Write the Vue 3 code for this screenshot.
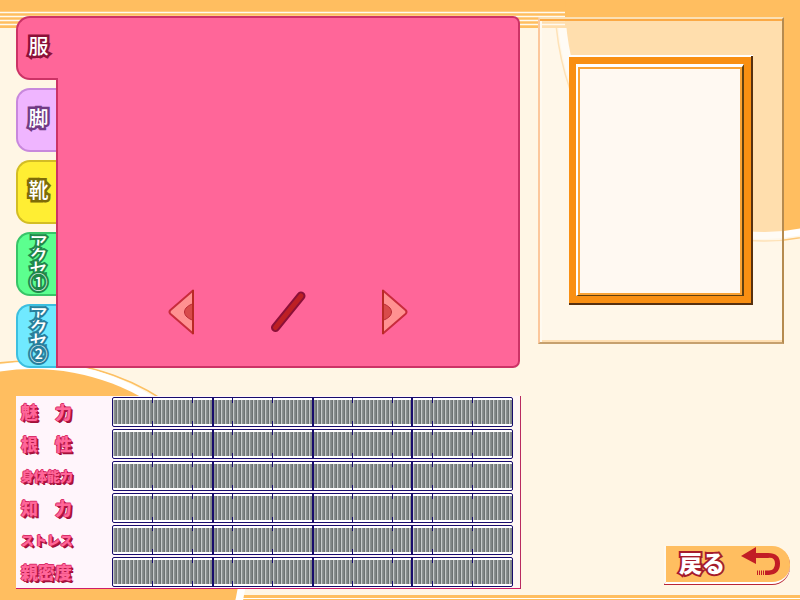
<script setup>
import { ref } from 'vue'

const tabs = [
  { id: 'clothes', label: '服' },
  { id: 'legs', label: '脚' },
  { id: 'shoes', label: '靴' },
  { id: 'acc1', label: 'アクセ①', long: true },
  { id: 'acc2', label: 'アクセ②', long: true },
]
const active = ref('clothes')

const stats = [
  { label: '魅　力' },
  { label: '根　性' },
  { label: '身体能力', narrow: true },
  { label: '知　力' },
  { label: 'ストレス', narrow: true },
  { label: '親密度' },
]
</script>

<template>
  <main class="page">
    <svg class="backdrop" viewBox="0 0 800 600" preserveAspectRatio="none" aria-hidden="true">
      <rect width="800" height="600" fill="#fff6e5" />
      <rect width="800" height="28" fill="#ffbe60" />
      <path d="M0 12.5H565M0 16.5H565M0 20.5H565M0 24.5H565" stroke="#fffaf0" stroke-width="1.4" />
      <ellipse cx="765" cy="0" rx="210" ry="241" fill="none" stroke="#fdc777" stroke-width="1.5" clip-path="url(#low)" />
      <ellipse cx="765" cy="0" rx="208" ry="239" fill="#fff" clip-path="url(#low)" />
      <ellipse cx="765" cy="0" rx="200" ry="232" fill="#ffbe60" />
      <clipPath id="low"><rect x="540" y="28" width="260" height="240" /></clipPath>
      <clipPath id="upper"><rect y="340" width="220" height="70" /></clipPath>
      <rect y="595" width="800" height="5" fill="#ffbe60" />
      <path d="M240 598.5H800" stroke="#fff" />
      <ellipse cx="31" cy="564" rx="224" ry="203" fill="none" stroke="#fdc062" stroke-width="1.6" clip-path="url(#upper)" />
      <ellipse cx="33" cy="562" rx="214" ry="200" fill="#fff" />
      <ellipse cx="33" cy="560" rx="207" ry="191" fill="#ffbe60" />
    </svg>

    <section class="top">
      <div class="wardrobe">
        <nav class="tabs">
          <button
            v-for="tab in tabs"
            :key="tab.id"
            type="button"
            :class="['tab', tab.id, { active: active === tab.id }]"
            @click="active = tab.id"
          >
            <span :class="['tab-text', { long: tab.long }]">{{ tab.label }}</span>
          </button>
        </nav>
        <div class="panel">
          <div class="pager">
            <button type="button" class="arrow" aria-label="前へ">
              <svg width="26" height="46" viewBox="0 0 26 46">
                <path d="M25 1.500V44.500L2.500 25Q.5 23 2.500 21Z" fill="#ff9191" stroke="#c82c3c" stroke-width="2" stroke-linejoin="round" />
                <path d="M24.500 15C21 16 16.500 19 16.500 23S21 30 24.500 31Z" fill="#d84b4b" stroke="#b92a35" />
                <path d="M25 1V45" stroke="#b92a25" stroke-width="2" />
              </svg>
            </button>
            <svg class="slash" width="36" height="42" viewBox="0 0 36 42" aria-hidden="true">
              <path d="M5.500 36.500L31 5" stroke="#8c1038" stroke-width="9" stroke-linecap="round" />
              <path d="M5.500 36.500L31 5" stroke="#bd2024" stroke-width="5" stroke-linecap="round" />
            </svg>
            <button type="button" class="arrow" aria-label="次へ">
              <svg width="26" height="46" viewBox="0 0 26 46">
                <path d="M1 1.500V44.500L23.500 25Q25.500 23 23.500 21Z" fill="#ff9191" stroke="#c82c3c" stroke-width="2" stroke-linejoin="round" />
                <path d="M1.500 15C5 16 9.500 19 9.500 23S5 30 1.500 31Z" fill="#d84b4b" stroke="#b92a35" />
                <path d="M1 1V45" stroke="#b92a25" stroke-width="2" />
              </svg>
            </button>
          </div>
        </div>
      </div>

      <div class="preview">
        <div class="frame"><div class="frame-inner"></div></div>
      </div>
    </section>

    <section class="bottom">
      <dl class="stats">
        <div v-for="stat in stats" :key="stat.label" class="stat">
          <dt :class="{ narrow: stat.narrow }">{{ stat.label }}</dt>
          <dd><div class="gauge"><div class="bars"></div></div></dd>
        </div>
      </dl>
      <div class="actions">
        <button type="button" class="back">
          <span class="back-text">戻る</span>
          <svg width="40" height="30" viewBox="0 0 40 30" aria-hidden="true">
            <path d="M0 9L15 0V6H27Q39 6 39 16.500T28 28H24V23.500H28Q34 23 34 16.500T27 11H15V17Z" fill="#c21d25" />
            <path d="M22.500 23.500V28M20.500 23.500V28M18.500 23.500V28M16.500 23.500V28" stroke="#c21d25" />
          </svg>
        </button>
      </div>
    </section>
  </main>
</template>

<style>
body {
  margin: 0;
  background: #fff6e5;
}
</style>

<style scoped>
.page {
  position: relative;
  isolation: isolate;
  box-sizing: border-box;
  min-height: 100vh;
  padding: 16px 0 11px 16px;
  display: flex;
  flex-direction: column;
  gap: 28px;
  overflow: hidden;
  font-family: "Noto Sans CJK JP", "Noto Sans", sans-serif;
  font-weight: 900;
}
.backdrop {
  position: absolute;
  inset: 0;
  z-index: -1;
  width: 100%;
  height: 100%;
}
button {
  margin: 0;
  padding: 0;
  border: 0;
  background: none;
  font: inherit;
  cursor: pointer;
}
svg {
  display: block;
}
.top {
  display: grid;
  grid-template-columns: 504fr 246fr;
  gap: 18px;
  align-items: start;
  padding-right: 16px;
}
.wardrobe {
  display: flex;
}
.tabs {
  display: flex;
  flex-direction: column;
  gap: 8px;
  flex: 0 0 40px;
}
.tab {
  --edge: #c888dd;
  --ink: #713b85;
  box-sizing: border-box;
  height: 64px;
  padding-left: 3px;
  padding-bottom: 4px;
  border: 2px solid var(--edge);
  border-right: 0;
  border-radius: 14px 0 0 14px;
  display: flex;
  align-items: center;
  justify-content: center;
}
.tab.active {
  position: relative;
  z-index: 1;
  margin-right: -2px;
  padding-right: 2px;
}
.clothes { --edge: #cc3366; --ink: #8c1038; background: #ff6699; }
.legs { background: #efb5ff; }
.shoes { --edge: #d3bd24; --ink: #7e6c08; background: #ffee33; }
.acc1 { --edge: #38c468; --ink: #20874a; background: #5cff8f; }
.acc2 { --edge: #3cbfe0; --ink: #287f9c; background: #70e9ff; }
.tab-text {
  color: #fff;
  font-size: 20px;
  font-weight: 500;
  line-height: 20px;
  -webkit-text-stroke: 5px var(--ink);
  paint-order: stroke fill;
  text-shadow: 1px 1px 0 var(--ink);
}
.tab-text.long {
  width: 19px;
  font-size: 18px;
  line-height: 13px;
  word-break: break-all;
  -webkit-text-stroke-width: 4px;
}
.panel {
  box-sizing: border-box;
  flex: 1;
  min-height: 352px;
  padding-bottom: 31px;
  border: 2px solid #cc3366;
  border-radius: 0 7px 7px 0;
  background: #ff6699;
  display: flex;
  align-items: flex-end;
  justify-content: center;
}
.pager {
  display: flex;
  align-items: center;
  gap: 76px;
}
.preview {
  box-sizing: border-box;
  margin-top: 1px;
  padding: 37px 29px;
  min-height: 327px;
  border: 2px solid;
  border-color: #fbe0b5 #b58b50 #c6a06e #fcc79c;
  background: rgba(255, 247, 237, 0.55);
  background-clip: padding-box;
  box-shadow: inset 0 2px #fba945, inset 2px 0 #fffaf0, inset 0 -2px #ffdfb2;
}
.frame {
  box-sizing: border-box;
  height: 249px;
  padding: 8px 7px 7px;
  border-right: 2px solid #57300f;
  border-bottom: 2px solid #57300f;
  background: #f98f12;
  box-shadow: 0 -1px #fff, inset 0 1px #fff;
}
.frame-inner {
  box-sizing: border-box;
  height: 100%;
  border: 2px solid;
  border-top-width: 3px;
  border-bottom-width: 1px;
  border-color: #fff #604010 #604010 #fff;
  background: #fff9f2;
  box-shadow: inset 0 0 0 2px #fba334;
}
.bottom {
  display: flex;
  justify-content: space-between;
}
.stats {
  box-sizing: border-box;
  flex: 0 1 505px;
  margin: 0;
  padding-right: 7px;
  border-right: 1px solid #b92a60;
  border-bottom: 1px solid #cf1c68;
  background: linear-gradient(90deg, #fff5fb 80%, #fff7f2);
}
.stat {
  display: grid;
  grid-template-columns: 96px 1fr;
  height: 32px;
}
.stat dt {
  padding-left: 5px;
  color: #ff6699;
  font-size: 17px;
  line-height: 32px;
  white-space: nowrap;
  -webkit-text-stroke: 1px #ff5a90;
  paint-order: stroke fill;
  text-shadow: 1px 1px 0 #b01644, -1px 0 0 #d8306c, 0 -1px 0 #d8306c, 2px 2px 0 #a01038;
}
.stat dt.narrow {
  font-size: 13px;
}
.stat dd {
  margin: 0;
  padding: 1px 0;
}
.gauge {
  box-sizing: border-box;
  height: 30px;
  padding: 2px 0;
  border: 1px solid #170b6c;
  border-radius: 2px;
  background:
    linear-gradient(#170b6c, #170b6c) 25% 0 / 2px 100% no-repeat,
    linear-gradient(#170b6c, #170b6c) 50% 0 / 2px 100% no-repeat,
    linear-gradient(#170b6c, #170b6c) 75% 0 / 2px 100% no-repeat,
    repeating-linear-gradient(90deg, transparent 0 39px, #170b6c 39px 40px),
    #fff;
}
.bars {
  height: 24px;
  background:
    linear-gradient(#170b6c, #170b6c) 25% 0 / 2px 100% no-repeat,
    linear-gradient(#170b6c, #170b6c) 50% 0 / 2px 100% no-repeat,
    linear-gradient(#170b6c, #170b6c) 75% 0 / 2px 100% no-repeat,
    repeating-linear-gradient(90deg, transparent 0 39px, #170b6c 39px 40px) 0 0 / 100% 3px no-repeat,
    repeating-linear-gradient(90deg, transparent 0 39px, #170b6c 39px 40px) 0 100% / 100% 3px no-repeat,
    repeating-linear-gradient(90deg, #c6caca 0 1px, #8b9191 1px 2px, #7e8484 2px 3px, #6c7272 3px 4px);
}
.actions {
  display: flex;
  align-items: flex-end;
  padding: 0 10px 5px 0;
}
.back {
  box-sizing: border-box;
  width: 126px;
  height: 38px;
  padding: 0 9px 4px 13px;
  border-left: 2px solid #fffaf0;
  border-bottom: 2px solid #fff;
  border-radius: 0 18px 18px 0;
  background: #ffbe60;
  box-shadow: 0 1px #b92535;
  display: flex;
  align-items: center;
  justify-content: space-between;
}
.back-text {
  color: #fff;
  font-size: 23px;
  line-height: 32px;
  -webkit-text-stroke: 4px #a51c2c;
  paint-order: stroke fill;
  text-shadow: 1px 1px 0 #a51c2c;
}
</style>
